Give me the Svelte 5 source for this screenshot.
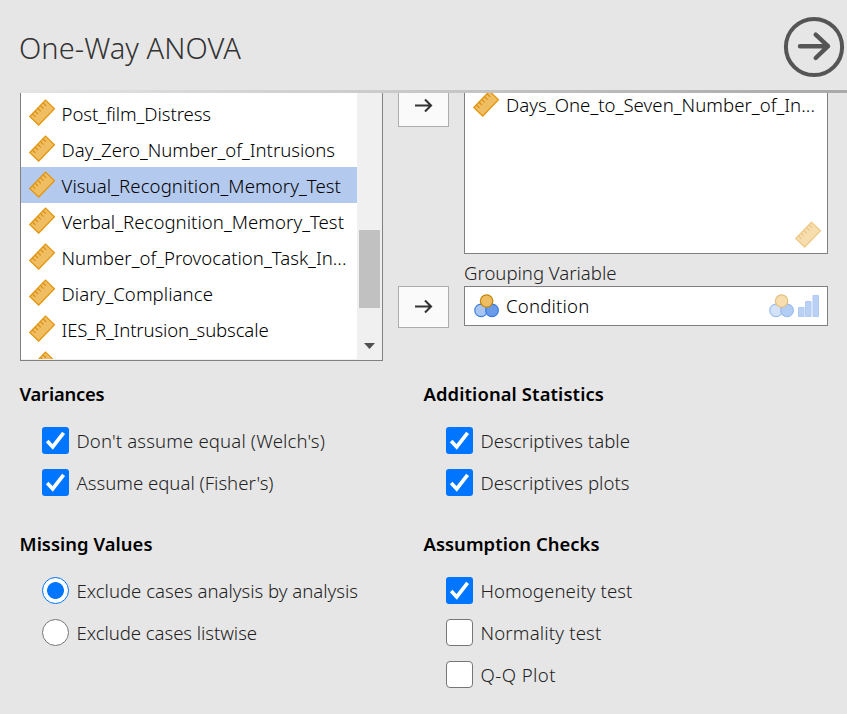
<script>
  const variables = [
    { name: 'Post_film_Distress', width: 149.5 },
    { name: 'Day_Zero_Number_of_Intrusions', width: 273.5 },
    { name: 'Visual_Recognition_Memory_Test', width: 279.5, selected: true },
    { name: 'Verbal_Recognition_Memory_Test', width: 282.5 },
    { name: 'Number_of_Provocation_Task_In...', width: 285 },
    { name: 'Diary_Compliance', width: 151.5 },
    { name: 'IES_R_Intrusion_subscale', width: 207 },
    { name: '', width: 0 }
  ];

  const groups = [
    {
      title: 'Variances', width: 85, type: 'checkbox',
      options: [
        { label: "Don't assume equal (Welch's)", width: 248.5, on: true },
        { label: "Assume equal (Fisher's)", width: 197, on: true }
      ]
    },
    {
      title: 'Additional Statistics', width: 180.5, type: 'checkbox',
      options: [
        { label: 'Descriptives table', width: 149.5, on: true },
        { label: 'Descriptives plots', width: 149, on: true }
      ]
    },
    {
      title: 'Missing Values', width: 133, type: 'radio',
      options: [
        { label: 'Exclude cases analysis by analysis', width: 281.5, on: true },
        { label: 'Exclude cases listwise', width: 180.5, on: false }
      ]
    },
    {
      title: 'Assumption Checks', width: 176, type: 'checkbox',
      options: [
        { label: 'Homogeneity test', width: 152, on: true },
        { label: 'Normality test', width: 121, on: false },
        { label: 'Q-Q Plot', width: 75.5, on: false }
      ]
    }
  ];

  // Tracks a label so that it spans the given width.
  function fit(node, width) {
    const count = node.textContent.length;
    if (!count) return;
    const natural = node.getBoundingClientRect().width;
    node.style.letterSpacing = `${(width - natural) / count}px`;
  }
</script>

{#snippet ruler()}
  <svg class="icon" width="28" height="28" viewBox="0 0 28 28">
    <g transform="translate(14.1 13.6) rotate(-46)">
      <rect x="-11.3" y="-6.2" width="22.6" height="12.4" fill="#f0be62" stroke="#e3960f" stroke-width="1.3" />
      <path d="M-7.7 -6v4.2M-3.9 -6v4.2M0 -6v4.2M3.9 -6v4.2M7.7 -6v4.2" stroke="#d98d0c" stroke-width="1.1" />
    </g>
  </svg>
{/snippet}

{#snippet nominal()}
  <svg class="icon" width="26" height="24" viewBox="0 0 26 24">
    <circle cx="7.1" cy="16.4" r="6.3" fill="#a9c6f3" stroke="#3e7fe0" stroke-width="1.2" />
    <circle cx="18" cy="16.4" r="6.3" fill="#6a9be8" stroke="#3579e0" stroke-width="1.2" />
    <circle cx="12.6" cy="7" r="6.2" fill="#f0be62" stroke="#c3870d" stroke-width="1.3" />
  </svg>
{/snippet}

{#snippet arrow()}
  <svg width="20" height="16" viewBox="0 0 20 16" fill="none" stroke="#333" stroke-width="2.1">
    <path d="M1 7.5h16M11 1.5l6 6-6 6" />
  </svg>
{/snippet}

<div class="panel">
  <header>
    <h1><span use:fit={222}>One-Way ANOVA</span></h1>
    <svg width="62" height="62" viewBox="0 0 62 62" fill="none" stroke="#555">
      <circle cx="31" cy="31" r="28.1" stroke-width="4" />
      <path d="M17 30.2H45M32.7 18.7L45 30.2L32.7 42" stroke-width="4.4" stroke-linecap="round" stroke-linejoin="round" />
    </svg>
  </header>
  <div class="rule"></div>

  <section class="assign">
    <div class="list">
      <div class="rows">
        {#each variables as v}
          <div class="row" class:selected={v.selected}>
            {@render ruler()}<span use:fit={v.width}>{v.name}</span>
          </div>
        {/each}
      </div>
      <div class="scroll">
        <div class="thumb"></div>
        <svg width="11" height="6" viewBox="0 0 11 6"><path d="M0 0h11L5.5 6z" fill="#505050" /></svg>
      </div>
    </div>

    <div class="moves">
      <button class="first" aria-label="Assign dependent">{@render arrow()}</button>
      <button aria-label="Assign grouping">{@render arrow()}</button>
    </div>

    <div class="targets">
      <div class="dependents">
        <div class="item">{@render ruler()}<span use:fit={309}>Days_One_to_Seven_Number_of_In...</span></div>
        <div class="hint">{@render ruler()}</div>
      </div>
      <div class="caption"><span use:fit={152.5}>Grouping Variable</span></div>
      <div class="grouping">
        {@render nominal()}
        <span use:fit={83.5}>Condition</span>
        <div class="hints">
          {@render nominal()}
          <svg width="22" height="22" viewBox="0 0 22 22" fill="#79a5eb" stroke="#6096ed">
            <path d="M.5 12.5h5.5v9H.5zM7.5 6.5H13v15H7.5zM15 .5h5.5v21H15z" />
          </svg>
        </div>
      </div>
    </div>
  </section>

  <section class="options">
    {#each groups as g}
      <div class="group">
        <h2><span use:fit={g.width}>{g.title}</span></h2>
        {#each g.options as o}
          <div class="option">
            <i class="box {g.type}" class:on={o.on}>
              {#if o.on && g.type === 'checkbox'}
                <svg width="27" height="27" viewBox="0 0 27 27"><path d="M5.2 14.1l5.5 5.8L21.6 5.8" fill="none" stroke="#fff" stroke-width="3.7" /></svg>
              {/if}
            </i>
            <span use:fit={o.width}>{o.label}</span>
          </div>
        {/each}
      </div>
    {/each}
  </section>
</div>

<style>
  :global(body) { margin: 0; background: #e6e6e6; }
  .panel {
    width: 847px;
    height: 714px;
    overflow: hidden;
    background: #e6e6e6;
    color: #222;
    font: 18.6px/28px "Noto Sans", "Open Sans", sans-serif;
    font-weight: 350;
  }
  .panel * { box-sizing: border-box; }
  span { display: inline-block; white-space: nowrap; }
  svg { display: block; flex: none; }
  header {
    display: flex;
    justify-content: space-between;
    height: 90px;
    padding: 16px 2px 0 19px;
  }
  h1 { margin: 12px 0 0; color: #333; font-size: 29px; line-height: 40px; font-weight: 350; }
  .rule { height: 3px; background: linear-gradient(90deg, #e6e6e6, #a9a9a9); }
  .assign { display: flex; height: 268px; padding-left: 20px; color: #000; }
  .list {
    display: flex;
    width: 363px;
    height: 268px;
    border: 1px solid #808080;
    border-top: 0;
    background: #f0f0f0;
  }
  .rows { width: 336px; height: 266px; padding-top: 2px; overflow: hidden; background: #fff; }
  .row { display: flex; align-items: center; height: 36px; padding-left: 7px; gap: 5.5px; }
  .row > span, .item > span { position: relative; top: 1px; }
  .selected { background: #b4c9ee; }
  .scroll { display: flex; flex-direction: column; align-items: center; width: 25px; padding-top: 137px; }
  .thumb { width: 21px; height: 78px; margin-bottom: 35px; background: #c1c1c1; }
  .moves { width: 81px; padding-left: 15px; }
  button {
    display: grid;
    place-items: center;
    width: 51px;
    height: 42px;
    padding: 0;
    border: 1px solid #adadad;
    border-radius: 0;
    background: #fafafa;
  }
  .first { height: 34px; margin-bottom: 159px; padding-bottom: 7px; border-top: 0; }
  .targets { width: 364px; }
  .dependents {
    display: flex;
    flex-direction: column;
    justify-content: space-between;
    height: 161px;
    padding: 0 5px 4px 7px;
    border: 1px solid #808080;
    border-top: 0;
    background: #fff;
    overflow: hidden;
  }
  .item { display: flex; align-items: center; gap: 6px; height: 28px; margin-top: -3px; }
  .hint { display: flex; justify-content: flex-end; opacity: .5; }
  .caption { height: 32px; padding-top: 5px; color: #222; }
  .grouping {
    display: flex;
    align-items: center;
    height: 40px;
    padding: 0 7px 0 9px;
    border: 1px solid #808080;
    background: #fff;
  }
  .grouping > span { margin-left: 6px; }
  .hints { display: flex; align-items: center; gap: 3px; margin-left: auto; opacity: .5; }
  .options { display: grid; grid-template-columns: 404px 404px; grid-template-rows: 150px 180px; padding: 18px 0 0 20px; }
  h2 { margin: 0 0 18px; font-size: 18.4px; line-height: 29px; font-weight: 650; color: #000; }
  h2 span { margin-left: -.5px; }
  .option { display: flex; align-items: center; height: 28px; margin-bottom: 14px; padding-left: 22px; gap: 7.5px; }
  .option > span { position: relative; top: 1px; }
  .box { display: block; flex: none; width: 27px; height: 27px; border: 1px solid #767676; border-radius: 4px; background: #fff; }
  .checkbox.on { border: 0; background: #0075ff; border-radius: 3px; }
  .radio { border-radius: 50%; }
  .radio.on { border-color: #0075ff; background: radial-gradient(circle, #0075ff 8px, #fff 8.8px); }
</style>
